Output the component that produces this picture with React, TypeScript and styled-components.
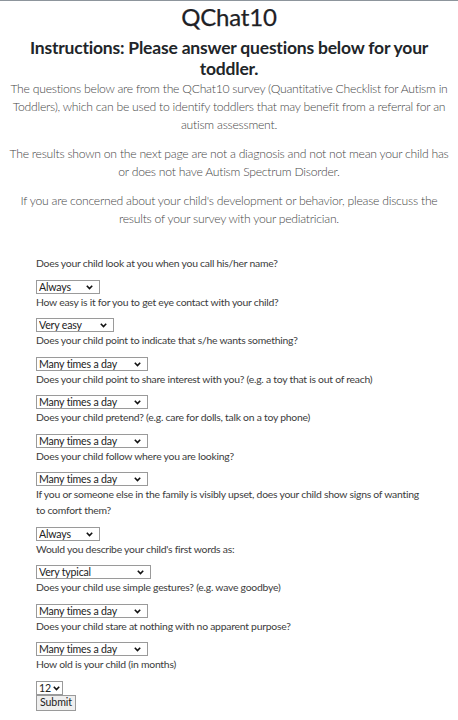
import React from "react";
import styled, { createGlobalStyle } from "styled-components";

const GlobalStyle = createGlobalStyle`
  html, body { margin: 0; padding: 0; background: #ffffff; }
  body { font-family: Lato, "Open Sans", "Liberation Sans", sans-serif; color: #212529; }
  * { box-sizing: border-box; }
`;

const Page = styled.div`
  border-top: 1px solid #8d959c;
  padding: 0 0 8px;
`;

const Title = styled.h1`
  margin: 1px 0 0;
  font-size: 24px;
  line-height: 30px;
  font-weight: 400;
  letter-spacing: -0.2px;
  text-align: center;
  color: #1e2125;
  -webkit-text-stroke: 0.25px #1e2125;
`;

const Subtitle = styled.h2`
  margin: 5px 0 1px;
  padding: 0 20px;
  font-size: 17.5px;
  line-height: 21px;
  font-weight: 700;
  letter-spacing: -0.2px;
  text-align: center;
  color: #212529;
`;

const Intro = styled.p`
  margin: 0 0 11px;
  padding: 0 4px;
  font-size: 12.2px;
  line-height: 18px;
  font-weight: 300;
  letter-spacing: -0.25px;
  text-align: center;
  color: #464646;
`;

const Form = styled.form`
  padding: 16px 36px 0 36px;
  display: flex;
  flex-direction: column;
  align-items: flex-start;
`;

const Question = styled.label`
  display: block;
  font-size: 10.4px;
  line-height: 16px;
  letter-spacing: -0.25px;
  color: #3c3c3c;
  margin-bottom: 8.5px;
  max-width: 390px;
`;

const SelectWrap = styled.div<{ $w: number }>`
  position: relative;
  width: ${(p) => p.$w}px;
  height: 14px;
  flex: none;
`;

const Select = styled.select`
  appearance: none;
  -webkit-appearance: none;
  display: block;
  width: 100%;
  height: 14px;
  margin: 0;
  padding: 0 0 0 2px;
  border: 1px solid #9a9a9a;
  border-radius: 0;
  background: #ffffff;
  font-family: Lato, "Open Sans", sans-serif;
  font-size: 10.6px;
  letter-spacing: -0.2px;
  line-height: 12px;
  color: #222;
  outline: none;
`;

const Chevron = styled.svg<{ $right: number }>`
  position: absolute;
  right: ${(p) => p.$right}px;
  top: 5px;
  width: 7px;
  height: 5px;
  pointer-events: none;
`;

const SubmitButton = styled.button`
  display: block;
  margin-top: 0;
  height: 16px;
  padding: 0 3px;
  border: 1px solid #9a9a9a;
  border-radius: 0;
  background: #efefef;
  font-family: Lato, "Open Sans", sans-serif;
  font-size: 10.6px;
  letter-spacing: -0.1px;
  line-height: 13px;
  color: #222;
`;

type Q = { text: string; options: string[]; width: number };

const freq = ["Many times a day", "A few times a day", "A few times a week", "Less than once a week", "Never"];
const always = ["Always", "Usually", "Sometimes", "Rarely", "Never"];

const questions: Q[] = [
  { text: "Does your child look at you when you call his/her name?", options: always, width: 64 },
  { text: "How easy is it for you to get eye contact with your child?", options: ["Very easy", "Quite easy", "Quite difficult", "Very difficult", "Impossible"], width: 78 },
  { text: "Does your child point to indicate that s/he wants something?", options: freq, width: 112 },
  { text: "Does your child point to share interest with you? (e.g. a toy that is out of reach)", options: freq, width: 112 },
  { text: "Does your child pretend? (e.g. care for dolls, talk on a toy phone)", options: freq, width: 112 },
  { text: "Does your child follow where you are looking?", options: freq, width: 112 },
  { text: "If you or someone else in the family is visibly upset, does your child show signs of wanting to comfort them?", options: always, width: 64 },
  { text: "Would you describe your child's first words as:", options: ["Very typical", "Quite typical", "Slightly unusual", "Very unusual", "My child doesn't speak"], width: 115 },
  { text: "Does your child use simple gestures? (e.g. wave goodbye)", options: freq, width: 112 },
  { text: "Does your child stare at nothing with no apparent purpose?", options: freq, width: 112 },
];

const months = Array.from({ length: 25 }, (_, i) => String(12 + i));

function Dropdown({ options, width, chevronRight = 7 }: { options: string[]; width: number; chevronRight?: number }) {
  return (
    <SelectWrap $w={width}>
      <Select defaultValue={options[0]}>
        {options.map((o) => (
          <option key={o} value={o}>
            {o}
          </option>
        ))}
      </Select>
      <Chevron $right={chevronRight} viewBox="0 0 7 5">
        <path d="M0.8 0.8 L3.5 3.6 L6.2 0.8" fill="none" stroke="#111" strokeWidth="1.6" />
      </Chevron>
    </SelectWrap>
  );
}

export default function App() {
  return (
    <>
      <GlobalStyle />
      <Page>
        <Title>QChat10</Title>
        <Subtitle>Instructions: Please answer questions below for your toddler.</Subtitle>
        <Intro>
          The questions below are from the QChat10 survey (Quantitative Checklist for Autism in Toddlers), which can be used to identify toddlers that may benefit from a referral for an autism assessment.
        </Intro>
        <Intro>
          The results shown on the next page are not a diagnosis and not not mean your child has or does not have Autism Spectrum Disorder.
        </Intro>
        <Intro>
          If you are concerned about your child's development or behavior, please discuss the results of your survey with your pediatrician.
        </Intro>
        <Form onSubmit={(e) => e.preventDefault()}>
          {questions.map((q) => (
            <React.Fragment key={q.text}>
              <Question>{q.text}</Question>
              <Dropdown options={q.options} width={q.width} />
            </React.Fragment>
          ))}
          <Question>How old is your child (in months)</Question>
          <Dropdown options={months} width={27} chevronRight={3} />
          <SubmitButton type="submit">Submit</SubmitButton>
        </Form>
      </Page>
    </>
  );
}
